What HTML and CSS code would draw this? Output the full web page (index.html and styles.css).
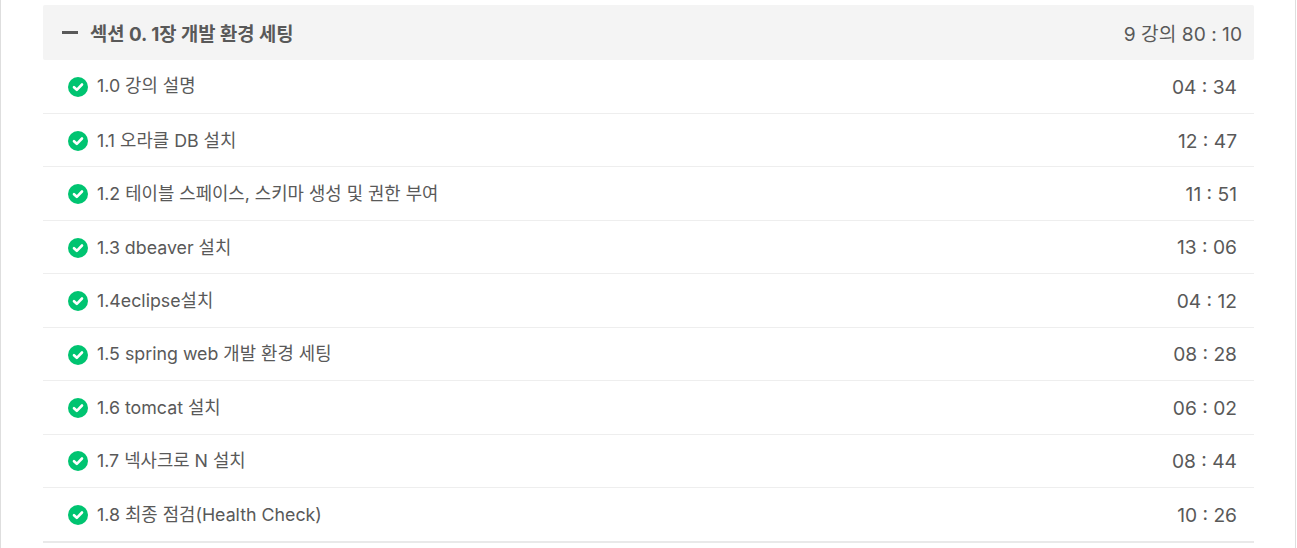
FILE: index.html
```html
<!DOCTYPE html>
<html lang="ko">
<head>
<meta charset="utf-8">
<title>커리큘럼</title>
<link rel="stylesheet" href="styles.css">
</head>
<body>
<svg class="defs" width="0" height="0" aria-hidden="true"><symbol id="check" viewBox="0 0 20 20"><circle cx="10" cy="10" r="10" fill="#00c471"/><path d="M6 10.2l2.8 2.6 5.2-5.3" fill="none" stroke="#fff" stroke-width="2.6" stroke-linecap="round" stroke-linejoin="round"/></symbol></svg>
<main class="page">
  <section class="section">
    <header class="section-head">
      <div class="section-title"><span class="minus"></span><span>섹션 0. 1장 개발 환경 세팅</span></div>
      <div class="section-info">9 강의 80 : 10</div>
    </header>
    <ul class="lessons">
      <li class="lesson"><div class="lesson-name"><svg class="ico"><use href="#check"/></svg><span class="name">1.0 강의 설명</span></div><span class="time">04 : 34</span></li>
      <li class="lesson"><div class="lesson-name"><svg class="ico"><use href="#check"/></svg><span class="name">1.1 오라클 DB 설치</span></div><span class="time">12 : 47</span></li>
      <li class="lesson"><div class="lesson-name"><svg class="ico"><use href="#check"/></svg><span class="name">1.2 테이블 스페이스, 스키마 생성 및 권한 부여</span></div><span class="time">11 : 51</span></li>
      <li class="lesson"><div class="lesson-name"><svg class="ico"><use href="#check"/></svg><span class="name">1.3 dbeaver 설치</span></div><span class="time">13 : 06</span></li>
      <li class="lesson"><div class="lesson-name"><svg class="ico"><use href="#check"/></svg><span class="name">1.4eclipse설치</span></div><span class="time">04 : 12</span></li>
      <li class="lesson"><div class="lesson-name"><svg class="ico"><use href="#check"/></svg><span class="name">1.5 spring web 개발 환경 세팅</span></div><span class="time">08 : 28</span></li>
      <li class="lesson"><div class="lesson-name"><svg class="ico"><use href="#check"/></svg><span class="name">1.6 tomcat 설치</span></div><span class="time">06 : 02</span></li>
      <li class="lesson"><div class="lesson-name"><svg class="ico"><use href="#check"/></svg><span class="name">1.7 넥사크로 N 설치</span></div><span class="time">08 : 44</span></li>
      <li class="lesson"><div class="lesson-name"><svg class="ico"><use href="#check"/></svg><span class="name">1.8 최종 점검(Health Check)</span></div><span class="time">10 : 26</span></li>
    </ul>
  </section>
</main>
</body>
</html>
```
FILE: styles.css
```css
* { box-sizing: border-box; }
html, body { margin: 0; height: 100%; background: #fff; }
body {
  font-family: Inter, "Noto Sans CJK KR", sans-serif;
  color: #595959;
  overflow: hidden;
}
.defs { display: block; height: 0; }
.page {
  width: 1296px;
  height: 548px;
  padding: 5px 41px 0 42px;
  border-left: 1px solid #dedede;
  border-right: 1px solid #dedede;
}
.section { border-bottom: 2px solid #e9e9e9; }
.section-head {
  display: flex;
  align-items: center;
  justify-content: space-between;
  height: 55px;
  padding: 0 12px 0 19px;
  background: #f4f4f4;
  border-radius: 2px;
}
.section-title {
  display: flex;
  align-items: center;
  gap: 12px;
  font-size: 18.8px;
  font-weight: 700;
}
.minus { width: 16px; height: 3px; background: #595959; }
.section-info { font-size: 19.2px; }
.lessons { list-style: none; margin: 0; padding: 0; }
.lesson {
  display: flex;
  align-items: center;
  justify-content: space-between;
  height: 53.44px;
  padding: 0 17px 0 25px;
  border-top: 1px solid #eeeeee;
}
.lesson:first-child { border-top: 0; height: 53px; }
.lesson-name { display: flex; align-items: center; gap: 9px; }
.ico { width: 20px; height: 20px; flex: none; position: relative; top: 0.6px; }
.name { font-size: 17.8px; position: relative; top: -1.6px; }
.lesson:first-child .name { top: -2.6px; }
.time { font-size: 19.2px; position: relative; top: 0.4px; }
```
